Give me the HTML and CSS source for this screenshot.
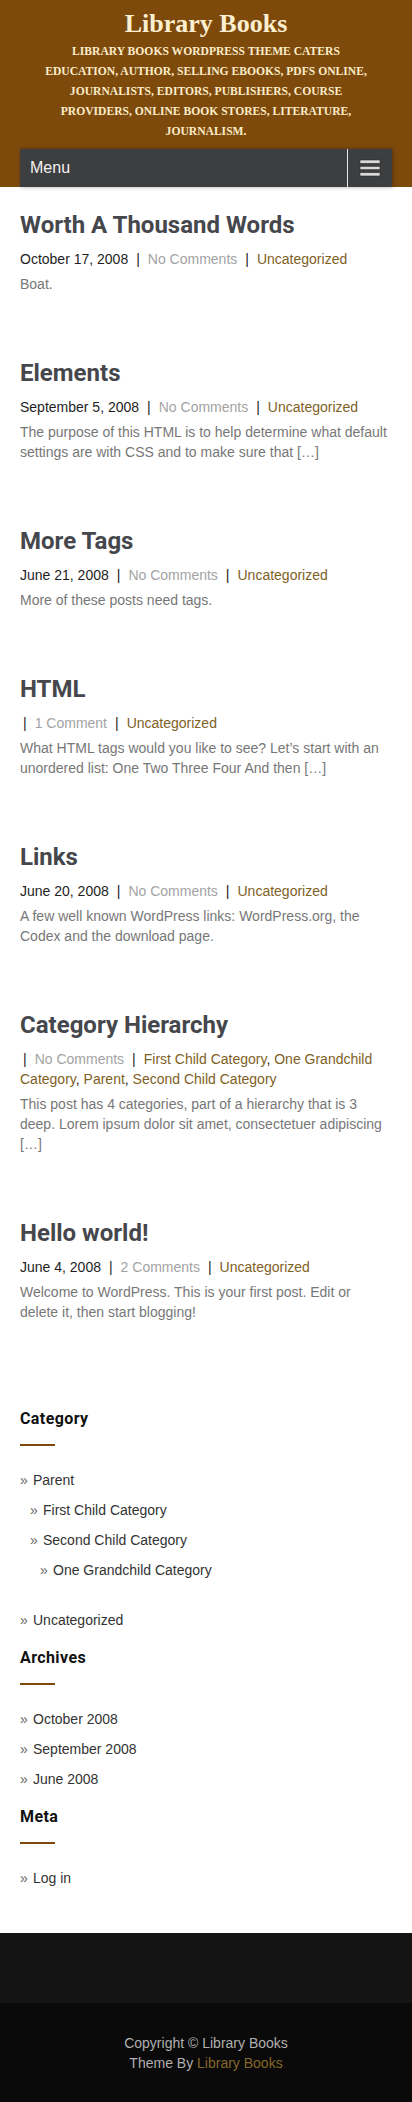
FILE: index.html
```html
<!DOCTYPE html>
<html lang="en">
<head>
<meta charset="utf-8">
<meta name="viewport" content="width=device-width, initial-scale=1">
<title>Library Books</title>
<link rel="stylesheet" href="styles.css">
</head>
<body>
<header class="site-header">
  <h1 class="site-title">Library Books</h1>
  <p class="site-desc">Library Books WordPress Theme caters education, author, selling ebooks, pdfs online, journalists, editors, publishers, course providers, online book stores, literature, journalism.</p>
  <nav class="menu-bar">
    <span class="menu-label">Menu</span>
    <button class="menu-toggle" aria-label="Toggle menu">
      <svg width="22" height="18" viewBox="0 0 22 18">
        <rect x="1" y="1" width="20" height="3.4" fill="#d9d9d9" stroke="#2a2a2a" stroke-width="0.6"/>
        <rect x="1" y="7.3" width="20" height="3.4" fill="#d9d9d9" stroke="#2a2a2a" stroke-width="0.6"/>
        <rect x="1" y="13.6" width="20" height="3.4" fill="#d9d9d9" stroke="#2a2a2a" stroke-width="0.6"/>
      </svg>
    </button>
  </nav>
</header>

<main class="content">
  <article class="post">
    <h2 class="post-title">Worth A Thousand Words</h2>
    <div class="post-meta"><span class="date">October 17, 2008</span><span class="sep">|</span><a class="comments" href="#">No Comments</a><span class="sep">|</span><a class="cat" href="#">Uncategorized</a></div>
    <p class="excerpt">Boat.</p>
  </article>
  <article class="post">
    <h2 class="post-title">Elements</h2>
    <div class="post-meta"><span class="date">September 5, 2008</span><span class="sep">|</span><a class="comments" href="#">No Comments</a><span class="sep">|</span><a class="cat" href="#">Uncategorized</a></div>
    <p class="excerpt">The purpose of this HTML is to help determine what default settings are with CSS and to make sure that […]</p>
  </article>
  <article class="post">
    <h2 class="post-title">More Tags</h2>
    <div class="post-meta"><span class="date">June 21, 2008</span><span class="sep">|</span><a class="comments" href="#">No Comments</a><span class="sep">|</span><a class="cat" href="#">Uncategorized</a></div>
    <p class="excerpt">More of these posts need tags.</p>
  </article>
  <article class="post">
    <h2 class="post-title">HTML</h2>
    <div class="post-meta"><span class="sep sep-first">|</span><a class="comments" href="#">1 Comment</a><span class="sep">|</span><a class="cat" href="#">Uncategorized</a></div>
    <p class="excerpt">What HTML tags would you like to see? Let’s start with an unordered list: One Two Three Four And then […]</p>
  </article>
  <article class="post">
    <h2 class="post-title">Links</h2>
    <div class="post-meta"><span class="date">June 20, 2008</span><span class="sep">|</span><a class="comments" href="#">No Comments</a><span class="sep">|</span><a class="cat" href="#">Uncategorized</a></div>
    <p class="excerpt">A few well known WordPress links: WordPress.org, the Codex and the download page.</p>
  </article>
  <article class="post">
    <h2 class="post-title">Category Hierarchy</h2>
    <div class="post-meta"><span class="sep sep-first">|</span><a class="comments" href="#">No Comments</a><span class="sep">|</span><a class="cat" href="#">First Child Category</a>, <a class="cat" href="#">One Grandchild Category</a>, <a class="cat" href="#">Parent</a>, <a class="cat" href="#">Second Child Category</a></div>
    <p class="excerpt">This post has 4 categories, part of a hierarchy that is 3 deep. Lorem ipsum dolor sit amet, consectetuer adipiscing […]</p>
  </article>
  <article class="post">
    <h2 class="post-title">Hello world!</h2>
    <div class="post-meta"><span class="date">June 4, 2008</span><span class="sep">|</span><a class="comments" href="#">2 Comments</a><span class="sep">|</span><a class="cat" href="#">Uncategorized</a></div>
    <p class="excerpt">Welcome to WordPress. This is your first post. Edit or delete it, then start blogging!</p>
  </article>
</main>

<aside class="sidebar">
  <section class="widget">
    <h3 class="widget-title">Category</h3>
    <ul class="widget-list">
      <li><a href="#">Parent</a>
        <ul class="children">
          <li><a href="#">First Child Category</a></li>
          <li><a href="#">Second Child Category</a>
            <ul class="children">
              <li><a href="#">One Grandchild Category</a></li>
            </ul>
          </li>
        </ul>
      </li>
      <li><a href="#">Uncategorized</a></li>
    </ul>
  </section>
  <section class="widget">
    <h3 class="widget-title">Archives</h3>
    <ul class="widget-list">
      <li><a href="#">October 2008</a></li>
      <li><a href="#">September 2008</a></li>
      <li><a href="#">June 2008</a></li>
    </ul>
  </section>
  <section class="widget">
    <h3 class="widget-title">Meta</h3>
    <ul class="widget-list">
      <li><a href="#">Log in</a></li>
    </ul>
  </section>
</aside>

<footer class="site-footer">
  <div class="footer-widgets"></div>
  <div class="copyright">
    <p>Copyright © Library Books</p>
    <p>Theme By <a href="#">Library Books</a></p>
  </div>
</footer>
</body>
</html>
```

FILE: styles.css
```css
* { box-sizing: border-box; }

body {
  margin: 0;
  background: #ffffff;
  font-family: "Liberation Sans", Arial, sans-serif;
  font-size: 14px;
  line-height: 20px;
  color: #333333;
}

a { text-decoration: none; }

/* Header */
.site-header {
  background: #7d4a0c;
  padding: 9px 20px 0;
  text-align: center;
}

.site-title {
  margin: 0;
  font-family: "Liberation Serif", "Times New Roman", serif;
  font-weight: 700;
  font-size: 26px;
  line-height: 30px;
  color: #fcefd0;
}

.site-desc {
  margin: 3px auto 0;
  max-width: 340px;
  font-family: "Liberation Serif", "Times New Roman", serif;
  font-weight: 700;
  font-size: 11.6px;
  line-height: 20px;
  text-transform: uppercase;
  color: #fbecc8;
}

.menu-bar {
  margin-top: 7px;
  height: 38px;
  background: #3d3e40;
  display: flex;
  align-items: stretch;
  justify-content: space-between;
  box-shadow: 1px 0 4px rgba(0, 0, 0, 0.35);
}

.menu-label {
  padding-left: 10px;
  font-size: 16px;
  line-height: 38px;
  color: #f2f2f2;
}

.menu-toggle {
  width: 45px;
  border: 0;
  border-left: 1px solid #e8e8e8;
  background: transparent;
  padding: 0;
  display: flex;
  align-items: center;
  justify-content: center;
}

.menu-toggle svg { display: block; }

/* Posts */
.content {
  padding: 23px 20px 0;
}

.post {
  margin-bottom: 64px;
}

.post-title {
  margin: 0;
  font-family: Roboto, "Liberation Sans", sans-serif;
  font-weight: 700;
  font-size: 24px;
  line-height: 30px;
  color: #45474c;
}

.post-meta {
  margin-top: 9px;
  color: #222222;
}

.post-meta .date { color: #1e1e1e; }

.post-meta .sep {
  margin: 0 8px;
  color: #222222;
}

.post-meta .sep-first { margin-left: 3px; }

.post-meta .comments { color: #a3a3a3; }

.post-meta .cat { color: #7e611f; }

.excerpt {
  margin: 5px 0 0;
  color: #777777;
}

/* Sidebar */
.sidebar {
  padding: 22px 20px 45px;
}

.widget {
  margin-bottom: 17px;
}

.widget:last-child { margin-bottom: 0; }

.widget-title {
  margin: 0;
  font-family: Roboto, "Liberation Sans", sans-serif;
  font-weight: 700;
  font-size: 16px;
  line-height: 22px;
  letter-spacing: 0.4px;
  color: #111111;
}

.widget-title::after {
  content: "";
  display: block;
  width: 35px;
  height: 2px;
  margin-top: 14px;
  background: #7d4a0c;
}

.widget-list {
  list-style: none;
  margin: 14px 0 0;
  padding: 0;
}

.widget-list li {
  padding-top: 10px;
}

.widget-list a {
  color: #333333;
}

.widget-list a::before {
  content: "»";
  display: inline-block;
  width: 13px;
  color: #666666;
}

.widget-list .children {
  list-style: none;
  margin: 0 0 20px;
  padding: 0 0 0 10px;
}

/* Footer */
.footer-widgets {
  height: 70px;
  background: #141414;
}

.copyright {
  background: #0a0a0a;
  padding: 30px 20px;
  text-align: center;
  color: #b0b0b0;
}

.copyright p { margin: 0; }

.copyright a { color: #85672a; }
```
